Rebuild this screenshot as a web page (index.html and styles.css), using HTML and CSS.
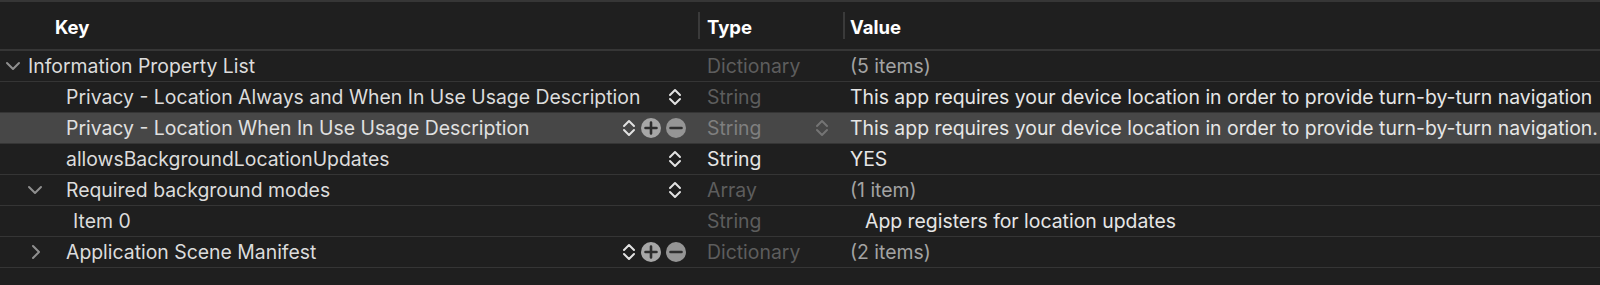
FILE: index.html
```html
<!DOCTYPE html>
<html>
<head>
<meta charset="utf-8">
<link rel="stylesheet" href="styles.css">
</head>
<body>
<div class="plist">
  <div class="row header">
    <div class="cell key"><span class="htext">Key</span></div>
    <div class="cell type"><span class="htext">Type</span></div>
    <div class="cell value"><span class="htext">Value</span></div>
  </div>

  <div class="row">
    <div class="cell key lvl0">
      <svg class="disc" width="16" height="10" viewBox="0 0 16 10"><path d="M2 2 L8 8 L14 2" /></svg>
      <span class="ktext">Information Property List</span>
    </div>
    <div class="cell type dim">Dictionary</div>
    <div class="cell value grey">(5 items)</div>
  </div>

  <div class="row">
    <div class="cell key lvl1">
      <span class="ktext">Privacy - Location Always and When In Use Usage Description</span>
      <span class="ctrls solo"><svg class="step" width="14" height="20" viewBox="0 0 14 20"><path d="M2 8 L7 3 L12 8 M2 12 L7 17 L12 12" /></svg></span>
    </div>
    <div class="cell type dim">String</div>
    <div class="cell value">This app requires your device location in order to provide turn-by-turn navigation</div>
  </div>

  <div class="row selected">
    <div class="cell key lvl1">
      <span class="ktext">Privacy - Location When In Use Usage Description</span>
      <span class="ctrls">
        <svg class="step" width="14" height="20" viewBox="0 0 14 20"><path d="M2 8 L7 3 L12 8 M2 12 L7 17 L12 12" /></svg>
        <svg class="btn plus" width="20" height="20" viewBox="0 0 20 20"><circle cx="10" cy="10" r="10"/><path d="M10 4.5 V15.5 M4.5 10 H15.5"/></svg>
        <svg class="btn minus" width="20" height="20" viewBox="0 0 20 20"><circle cx="10" cy="10" r="10"/><path d="M4.5 10 H15.5"/></svg>
      </span>
    </div>
    <div class="cell type seldim">
      <span>String</span>
      <svg class="step dimstep" width="14" height="20" viewBox="0 0 14 20"><path d="M2 8 L7 3 L12 8 M2 12 L7 17 L12 12" /></svg>
    </div>
    <div class="cell value">This app requires your device location in order to provide turn-by-turn navigation.</div>
  </div>

  <div class="row">
    <div class="cell key lvl1">
      <span class="ktext">allowsBackgroundLocationUpdates</span>
      <span class="ctrls solo"><svg class="step" width="14" height="20" viewBox="0 0 14 20"><path d="M2 8 L7 3 L12 8 M2 12 L7 17 L12 12" /></svg></span>
    </div>
    <div class="cell type bright">String</div>
    <div class="cell value">YES</div>
  </div>

  <div class="row">
    <div class="cell key lvl1 withdisc">
      <svg class="disc small" width="16" height="10" viewBox="0 0 16 10"><path d="M2 2 L8 8 L14 2" /></svg>
      <span class="ktext">Required background modes</span>
      <span class="ctrls solo"><svg class="step" width="14" height="20" viewBox="0 0 14 20"><path d="M2 8 L7 3 L12 8 M2 12 L7 17 L12 12" /></svg></span>
    </div>
    <div class="cell type dim">Array</div>
    <div class="cell value grey">(1 item)</div>
  </div>

  <div class="row">
    <div class="cell key lvl2">
      <span class="ktext">Item 0</span>
    </div>
    <div class="cell type dim">String</div>
    <div class="cell value indent">App registers for location updates</div>
  </div>

  <div class="row">
    <div class="cell key lvl1 withdisc">
      <svg class="disc right" width="10" height="16" viewBox="0 0 10 16"><path d="M2 2 L8 8 L2 14" /></svg>
      <span class="ktext">Application Scene Manifest</span>
      <span class="ctrls">
        <svg class="step" width="14" height="20" viewBox="0 0 14 20"><path d="M2 8 L7 3 L12 8 M2 12 L7 17 L12 12" /></svg>
        <svg class="btn plus" width="20" height="20" viewBox="0 0 20 20"><circle cx="10" cy="10" r="10"/><path d="M10 4.5 V15.5 M4.5 10 H15.5"/></svg>
        <svg class="btn minus" width="20" height="20" viewBox="0 0 20 20"><circle cx="10" cy="10" r="10"/><path d="M4.5 10 H15.5"/></svg>
      </span>
    </div>
    <div class="cell type dim">Dictionary</div>
    <div class="cell value grey">(2 items)</div>
  </div>
</div>
</body>
</html>
```

FILE: styles.css
```css
html, body {
  margin: 0;
  padding: 0;
  background: #1f1f1f;
}
body {
  width: 1600px;
  height: 285px;
  overflow: hidden;
  font-family: Inter, "Liberation Sans", sans-serif;
  font-size: 19.4px;
  color: #dedede;
}
.plist {
  border-top: 2px solid #363636;
}
.row {
  display: grid;
  grid-template-columns: 698px 145px 1fr;
  height: 30px;
  border-bottom: 1px solid #353535;
  align-items: center;
}
.row.header {
  height: 47px;
  border-bottom: 2px solid #363636;
}
.cell {
  display: flex;
  align-items: center;
  height: 100%;
  white-space: nowrap;
  overflow: hidden;
}
.header .type,
.header .value {
  border-left: 2px solid #3a3a3a;
  height: 27px;
}
.header .type { padding-left: 7px; }
.header .value { padding-left: 5px; }
.header .key { padding-left: 55px; }
.htext {
  font-weight: 700;
  color: #ffffff;
  font-size: 18.5px;
  padding-top: 2px;
}
.key {
  padding-right: 12px;
}
.lvl0 { padding-left: 5px; }
.lvl1 { padding-left: 66px; }
.lvl1.withdisc { padding-left: 27px; }
.lvl2 { padding-left: 73px; }
.ktext {
  flex: 1;
  overflow: hidden;
  color: #dcdcdc;
}
.disc {
  flex: none;
  fill: none;
  stroke: #8f8f8f;
  stroke-width: 2;
  stroke-linecap: round;
  stroke-linejoin: round;
  margin-right: 7px;
}
.disc.small {
  margin-right: 23px;
}
.disc.right {
  margin-left: 4px;
  margin-right: 25px;
}
.ctrls {
  flex: none;
  display: flex;
  align-items: center;
  gap: 5px;
}
.ctrls.solo {
  margin-right: 4px;
}
.step {
  fill: none;
  stroke: #e2e2e2;
  stroke-width: 2;
  stroke-linecap: round;
  stroke-linejoin: round;
}
.btn path {
  stroke: #2e2e2e;
  stroke-width: 2.6;
  stroke-linecap: round;
}
.plus circle { fill: #a7a7a7; }
.minus circle { fill: #959595; }
.type {
  padding-left: 9px;
}
.dim { color: #5d5d5d; }
.bright { color: #e4e4e4; }
.seldim {
  color: #7f7f7f;
  justify-content: space-between;
  padding-right: 14px;
}
.dimstep { stroke: #747474; }
.value {
  padding-left: 7px;
  color: #e6e6e6;
}
.value.grey { color: #a3a3a3; }
.value.indent { padding-left: 22px; }
.row.selected {
  background: #474747;
}
.row.selected .ktext { color: #e0e0e0; }
```
